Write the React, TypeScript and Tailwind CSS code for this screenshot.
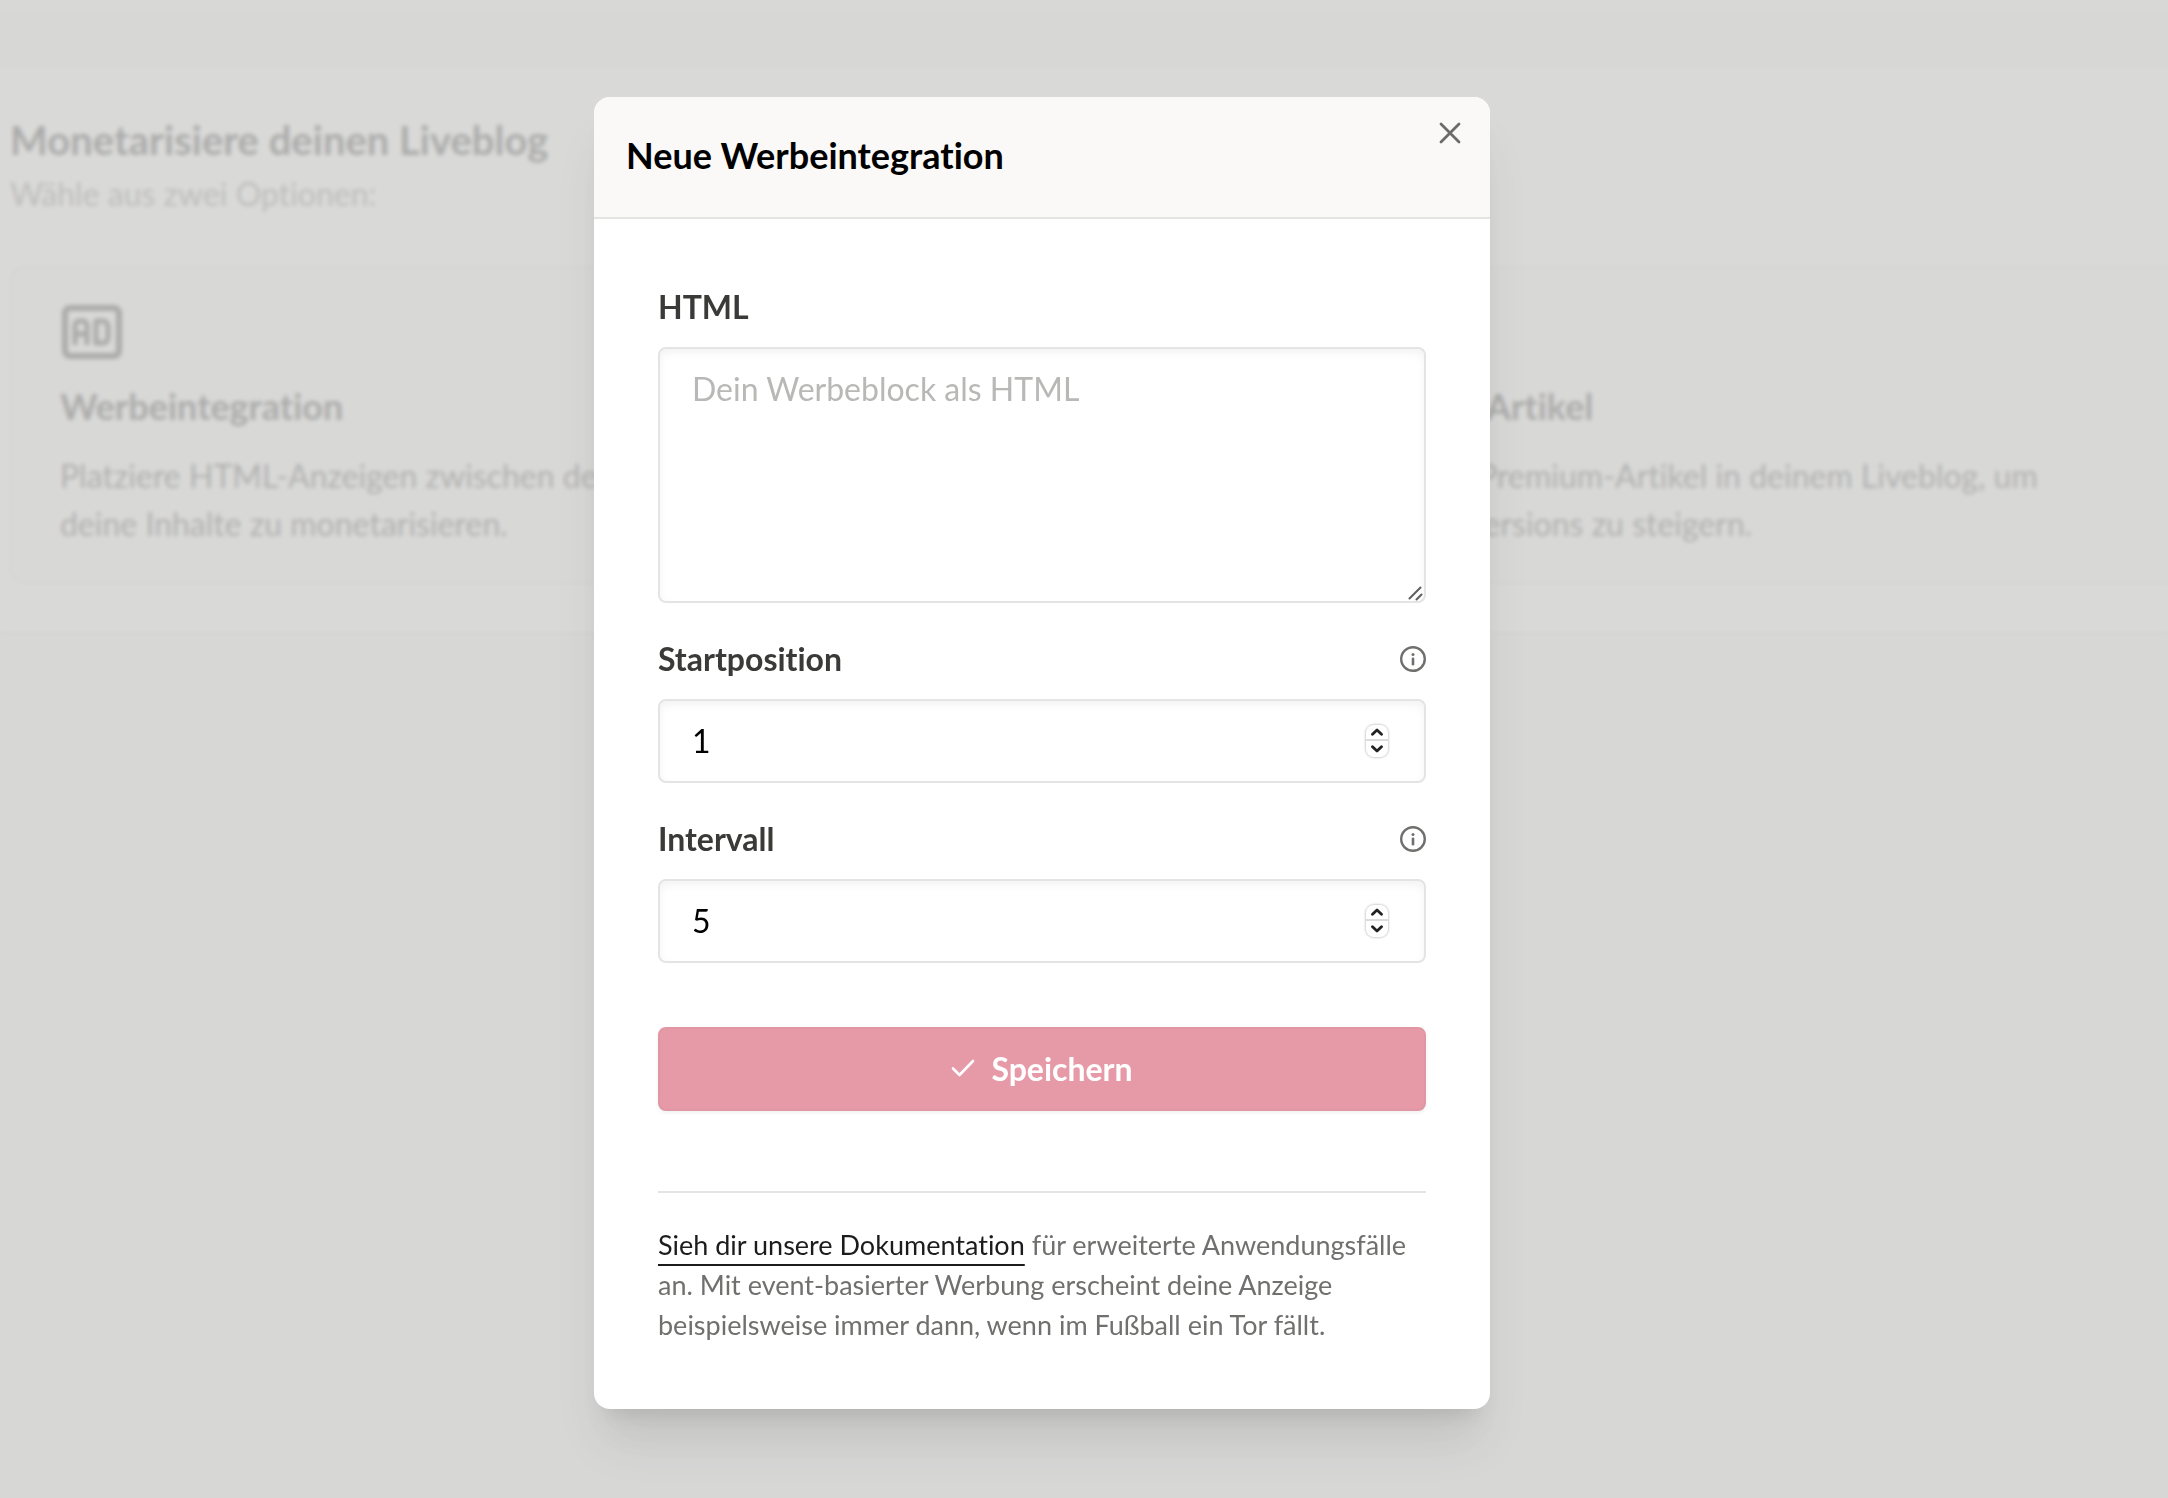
import { useState } from 'react'

type NumberFieldProps = {
  id: string
  label: string
  value: number
  onChange: (value: number) => void
}

function InfoIcon() {
  return (
    <svg viewBox="0 0 26 26" fill="none" className="size-[26px] text-[#6f6f6d]">
      <circle cx="13" cy="13" r="11.800" stroke="currentColor" strokeWidth="2.400" />
      <path d="M13 12.800v5.400" stroke="currentColor" strokeWidth="2.600" strokeLinecap="round" />
      <circle cx="13" cy="8.500" r="1.500" fill="currentColor" />
    </svg>
  )
}

function AdIcon() {
  return (
    <svg
      viewBox="0 0 64 64"
      fill="none"
      stroke="currentColor"
      strokeWidth="6"
      strokeLinecap="round"
      strokeLinejoin="round"
      className="size-16 text-black"
    >
      <rect x="5" y="8" width="54" height="48" rx="5" />
      <path d="M15 43V25a4 4 0 0 1 4-4h4a4 4 0 0 1 4 4v18M15 34h12" strokeWidth="5" />
      <path d="M36 21h7a5 5 0 0 1 5 5v12a5 5 0 0 1-5 5h-7z" strokeWidth="5" />
    </svg>
  )
}

function NumberField({ id, label, value, onChange }: NumberFieldProps) {
  return (
    <div className="space-y-4">
      <div className="flex items-center justify-between">
        <label htmlFor={id} className="font-bold text-[#3a3a38]">
          {label}
        </label>
        <button type="button" aria-label={`Info zu ${label}`}>
          <InfoIcon />
        </button>
      </div>
      <div className="flex items-center rounded-lg border-2 border-[#e4e4e3] bg-white pr-9 shadow-[inset_0_4px_8px_rgba(0,0,0,0.05)]">
        <input
          id={id}
          type="number"
          value={value}
          onChange={e => onChange(Number(e.target.value))}
          className="min-w-0 flex-1 appearance-none bg-transparent py-4 pl-8 text-black outline-none [appearance:textfield]"
        />
        <div className="flex w-[22px] flex-col divide-y-2 divide-[#dcdcdc] rounded-lg shadow-[0_0_2px_1px_rgba(0,0,0,0.18)]">
          <button type="button" aria-label="Erhöhen" onClick={() => onChange(value + 1)} className="flex h-4 items-center justify-center">
            <svg viewBox="0 0 12 8" fill="none" className="h-2 w-3">
              <path d="M1.500 6.200 6 2l4.500 4.200" stroke="#222" strokeWidth="2.800" strokeLinecap="round" strokeLinejoin="round" />
            </svg>
          </button>
          <button type="button" aria-label="Verringern" onClick={() => onChange(value - 1)} className="flex h-4 items-center justify-center">
            <svg viewBox="0 0 12 8" fill="none" className="h-2 w-3">
              <path d="M1.500 1.800 6 6l4.500-4.200" stroke="#222" strokeWidth="2.800" strokeLinecap="round" strokeLinejoin="round" />
            </svg>
          </button>
        </div>
      </div>
    </div>
  )
}

function MonetizePage() {
  return (
    <div className="min-h-screen overflow-hidden bg-[#f2f2f2]">
      <div className="h-[18px] border-b-2 border-[#ebebeb] bg-[#f6f6f6]" />
      <main className="mt-[50px] border-b-2 border-[#dddddd] bg-white py-12 pl-2.5">
        <h1 className="text-[40px] leading-[48px] font-bold text-black">Monetarisiere deinen Liveblog</h1>
        <p className="mt-1.5 text-[#666664]">Wähle aus zwei Optionen:</p>
        <div className="mt-12 grid w-[118%] grid-cols-2 gap-8">
          <section className="rounded-2xl border-2 border-[#dddddd] bg-[#fafafa] px-12 pt-8 pb-[34px]">
            <AdIcon />
            <h2 className="mt-4 text-4xl leading-[52px] font-bold text-black">Werbeintegration</h2>
            <p className="mt-5 text-[#1c1c1c]">
              Platziere HTML-Anzeigen zwischen deinen Beiträgen, um
              <br />
              deine Inhalte zu monetarisieren.
            </p>
          </section>
          <section className="rounded-2xl border-2 border-[#dddddd] bg-[#fafafa] px-12 pt-8 pb-[34px]">
            <div className="size-16" />
            <h2 className="mt-4 text-4xl leading-[52px] font-bold text-black">Paywall-Artikel</h2>
            <p className="mt-5 text-[#1c1c1c]">
              Platziere Premium-Artikel in deinem Liveblog, um
              <br />
              ihre Conversions zu steigern.
            </p>
          </section>
        </div>
      </main>
    </div>
  )
}

export default function App() {
  const [html, setHtml] = useState('')
  const [startposition, setStartposition] = useState(1)
  const [intervall, setIntervall] = useState(5)

  return (
    <div className="font-[Lato,sans-serif] text-[32px] leading-[48px] [font-variant-ligatures:none]">
      <MonetizePage />
      <div className="fixed inset-0 flex items-start justify-center overflow-y-auto bg-[#d1d1cf]/82 pt-[97px] pr-[84px] pb-12 backdrop-blur-[2px]">
        <div
          role="dialog"
          aria-modal="true"
          aria-labelledby="dialog-title"
          className="w-full max-w-4xl overflow-hidden rounded-2xl bg-white shadow-[0_40px_50px_-10px_rgba(0,0,0,0.1),0_16px_20px_-12px_rgba(0,0,0,0.1)]"
        >
          <header className="flex items-start justify-between border-b-2 border-[#e4e4e3] bg-[#faf9f7] pr-7 pl-8">
            <h2 id="dialog-title" className="pt-8 pb-9 text-4xl leading-[52px] font-bold text-black">
              Neue Werbeintegration
            </h2>
            <button type="button" aria-label="Schließen" className="mt-6">
              <svg viewBox="0 0 24 24" fill="none" className="size-6 text-[#6b6b69]">
                <path d="m3 3 18 18M21 3 3 21" stroke="currentColor" strokeWidth="2.800" strokeLinecap="round" />
              </svg>
            </button>
          </header>

          <div className="p-16">
            <form onSubmit={e => e.preventDefault()}>
              <div className="space-y-8">
                <div className="space-y-4">
                  <label htmlFor="html" className="block font-bold text-[#3a3a38]">
                    HTML
                  </label>
                  <div className="relative">
                    <textarea
                      id="html"
                      value={html}
                      onChange={e => setHtml(e.target.value)}
                      placeholder="Dein Werbeblock als HTML"
                      className="block h-64 w-full resize-none rounded-lg border-2 border-[#e4e4e3] px-8 py-4 text-black shadow-[inset_0_4px_8px_rgba(0,0,0,0.05)] outline-none placeholder:text-[#b8b8b6]"
                    />
                    <svg viewBox="0 0 16 16" fill="none" className="pointer-events-none absolute right-0.5 bottom-0.5 size-4">
                      <path d="M1.500 13.500 12.500 2.500M8.500 14.500l5-5" stroke="#5f5f5f" strokeWidth="2" strokeLinecap="round" />
                    </svg>
                  </div>
                </div>
                <NumberField id="startposition" label="Startposition" value={startposition} onChange={setStartposition} />
                <NumberField id="intervall" label="Intervall" value={intervall} onChange={setIntervall} />
              </div>
              <button
                type="submit"
                className="mt-16 flex w-full items-center justify-center gap-4 rounded-lg border-2 border-[#e096a3] bg-[#e69aa8] py-4 font-bold text-white shadow-[0_2px_4px_rgba(0,0,0,0.06)]"
              >
                <svg viewBox="0 0 24 24" fill="none" className="size-6">
                  <path d="m2 11.500 6.500 6.500L22 4" stroke="currentColor" strokeWidth="2.600" strokeLinecap="round" strokeLinejoin="round" />
                </svg>
                Speichern
              </button>
            </form>

            <p className="mt-20 border-t-2 border-[#e4e4e3] pt-8 text-[27px] leading-10 text-[#70706e]">
              <a
                href="#"
                className="text-[#1c1c1c] underline decoration-2 underline-offset-[9px] [text-decoration-skip-ink:none]"
              >
                Sieh dir unsere Dokumentation
              </a>{' '}
              für erweiterte Anwendungsfälle an. Mit event-basierter Werbung erscheint deine Anzeige beispielsweise immer
              dann, wenn im Fußball ein Tor fällt.
            </p>
          </div>
        </div>
      </div>
    </div>
  )
}
